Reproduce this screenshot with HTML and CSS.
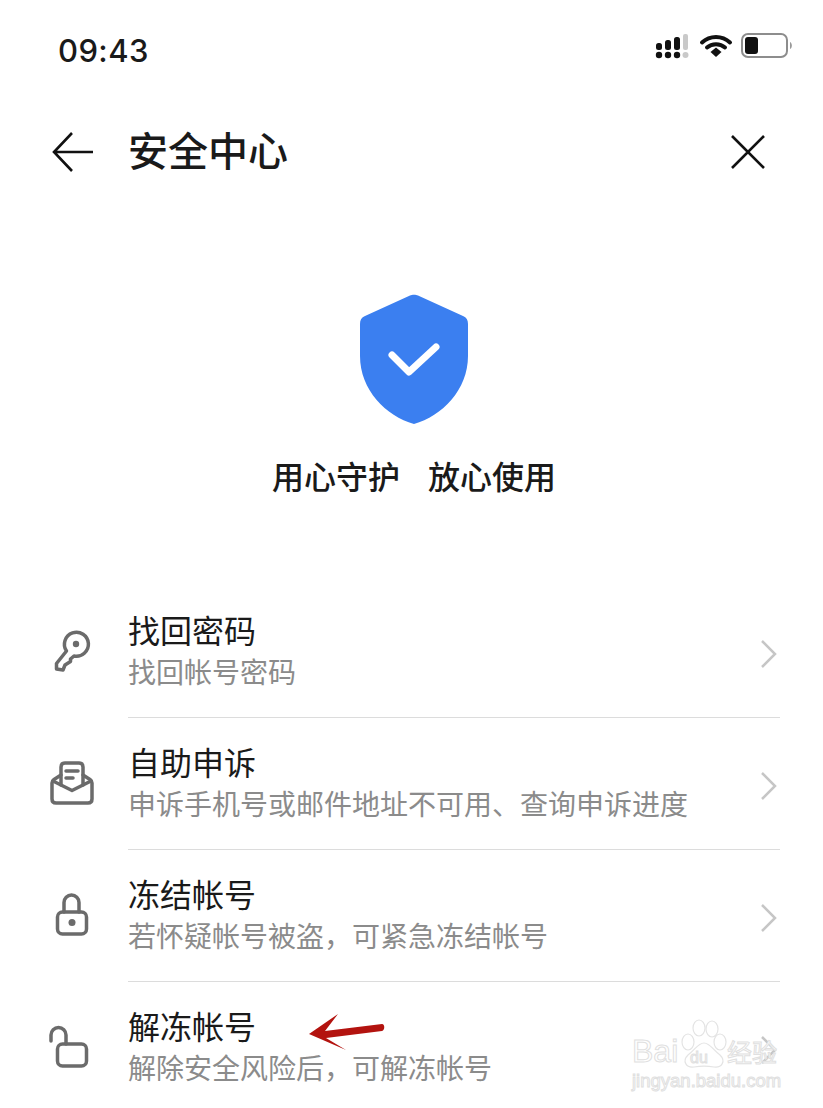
FILE: index.html
```html
<!DOCTYPE html>
<html lang="zh-CN">
  <head>
    <title>安全中心</title>
    <meta charset="UTF-8">
    <meta name="viewport" content="width=device-width, initial-scale=1">
    <link rel="stylesheet" href="styles.css">
  </head>
  <body>
    <div class="page">
      <!-- status bar -->
      <div class="status">
        <span class="time">09:43</span>
        <svg class="status-icons" width="140" height="30" viewBox="0 0 140 30">
          <g fill="#111">
            <rect x="1" y="11" width="6" height="7" rx="2.5"/>
            <rect x="10" y="8" width="6" height="10" rx="2.5"/>
            <rect x="19" y="5" width="6" height="13" rx="2.5"/>
            <circle cx="4" cy="23" r="3.2"/>
            <circle cx="13" cy="23" r="3.2"/>
            <circle cx="22" cy="23" r="3.2"/>
          </g>
          <rect x="28" y="2" width="5" height="16" rx="2" fill="#c9c9c9"/>
          <circle cx="30.5" cy="23" r="3" fill="#c9c9c9"/>
          <path d="M47 10.500C55 3 67 3 75 10.500M52 15.500C57 11 65 11 70 15.500" fill="none" stroke="#111" stroke-width="4" stroke-linecap="round"/>
          <path d="M55.500 20L61 15.500L66.500 20L61 25Z" fill="#111"/>
          <rect x="87" y="2" width="45" height="23" rx="6" fill="none" stroke="#8d8d8d" stroke-width="2"/>
          <rect x="90" y="5" width="13" height="17" rx="3" fill="#111"/>
          <path d="M135 10C137.500 11 137.500 16 135 17Z" fill="#9a9a9a"/>
        </svg>
      </div>

      <!-- nav -->
      <header class="nav">
        <svg class="nav-back" width="42" height="42" viewBox="0 0 42 42">
          <path d="M20 2L2 21L20 40M2 21H41" fill="none" stroke="#111" stroke-width="2.600"/>
        </svg>
        <h1 class="nav-title">安全中心</h1>
        <svg class="nav-close" width="34" height="34" viewBox="0 0 34 34">
          <path d="M1 1L33 33M33 1L1 33" fill="none" stroke="#111" stroke-width="2.600"/>
        </svg>
      </header>

      <!-- shield -->
      <section class="hero">
        <svg width="108" height="130" viewBox="0 0 108 130">
          <path d="M50 1.500C52 .5 56 .5 58 1.500L103 22C106.500 23.500 108 26 108 30V62C108 96 82 122 54 130C26 122 0 96 0 62V30C0 26 1.500 23.500 5 22Z" fill="#3b7ff0"/>
          <path d="M32 61L49 78L76 53" fill="none" stroke="#fff" stroke-width="7" stroke-linecap="round" stroke-linejoin="round"/>
        </svg>
        <p class="hero-text"><span>用心守护</span><span>放心使用</span></p>
      </section>

      <!-- menu -->
      <ul class="menu">
        <li class="row">
          <svg class="row-icon" width="60" height="60" viewBox="0 0 60 60">
            <path d="M24.500 31A12 12 0 1 1 32 36L28.500 39V41.500L23 45L21 50L14.500 49V43.500Z"/>
            <circle class="dot" cx="34" cy="24" r="3.200"/>
          </svg>
          <div class="row-text">
            <div class="row-title">找回密码</div>
            <div class="row-sub">找回帐号密码</div>
          </div>
          <svg class="chev" width="18" height="30" viewBox="0 0 18 30"><path d="M2 2L15 15L2 28"/></svg>
        </li>
        <li class="row">
          <svg class="row-icon" width="60" height="60" viewBox="0 0 60 60">
            <path d="M19 23L12 27.500Q10 29 10 31V47Q10 51 14 51H46Q50 51 50 47V31Q50 29 48 27.500L41 23"/>
            <path d="M11 29L30 38.500L49 29"/>
            <path d="M19 33V15Q19 11 23 11H37Q41 11 41 15V33"/>
            <path d="M24 19H36M24 26H31"/>
          </svg>
          <div class="row-text">
            <div class="row-title">自助申诉</div>
            <div class="row-sub">申诉手机号或邮件地址不可用、查询申诉进度</div>
          </div>
          <svg class="chev" width="18" height="30" viewBox="0 0 18 30"><path d="M2 2L15 15L2 28"/></svg>
        </li>
        <li class="row">
          <svg class="row-icon" width="60" height="60" viewBox="0 0 60 60">
            <rect x="15.500" y="28" width="29" height="22" rx="5"/>
            <path d="M22 28V18.500A7.500 7.500 0 0 1 37 18.500V28"/>
            <circle class="dot" cx="30" cy="38.500" r="3.500"/>
          </svg>
          <div class="row-text">
            <div class="row-title">冻结帐号</div>
            <div class="row-sub">若怀疑帐号被盗，可紧急冻结帐号</div>
          </div>
          <svg class="chev" width="18" height="30" viewBox="0 0 18 30"><path d="M2 2L15 15L2 28"/></svg>
        </li>
        <li class="row">
          <svg class="row-icon" width="60" height="60" viewBox="0 0 60 60">
            <rect x="15.500" y="28" width="29" height="22" rx="5"/>
            <path d="M9 25V19A7.500 7.500 0 0 1 24 19V28"/>
          </svg>
          <div class="row-text">
            <div class="row-title">解冻帐号</div>
            <div class="row-sub">解除安全风险后，可解冻帐号</div>
          </div>
          <svg class="chev" width="18" height="30" viewBox="0 0 18 30"><path d="M2 2L15 15L2 28"/></svg>
        </li>
      </ul>

      <!-- red arrow annotation -->
      <svg class="arrow" width="80" height="40" viewBox="0 0 80 40">
        <path d="M1 20L30 0L17 17L74 10C77 10 77 16 74 17L18 24L38 36Z" fill="#b3130f"/>
      </svg>

      <!-- watermark -->
      <div class="mark">
        <svg class="mark-paw" width="50" height="52" viewBox="0 0 50 52">
          <g fill="#fff" stroke="#e4e4e4" stroke-width="1.200">
            <ellipse cx="8" cy="24" rx="6" ry="8"/>
            <ellipse cx="19" cy="10" rx="6" ry="8"/>
            <ellipse cx="32" cy="11" rx="6" ry="8"/>
            <ellipse cx="40" cy="24" rx="6" ry="8"/>
            <path d="M24 25C30 25 33 32 40 37C46 43 42 50 34 49C28 48 20 48 14 49C6 50 2 43 8 37C15 32 18 25 24 25Z"/>
          </g>
        </svg>
        <span class="mark-bai">Bai</span>
        <span class="mark-du">du</span>
        <span class="mark-cn">经验</span>
        <span class="mark-url">jingyan.baidu.com</span>
      </div>
    </div>
  </body>
</html>
```

FILE: styles.css
```css
:root {
  --font-cjk: "Noto Sans CJK SC", "Noto Sans", sans-serif;
  --color-txt: #1a1a1a;
  --color-sub: #8b8b8b;
  --color-icon: #6b6b6b;
  --color-line: #dcdcdc;
}

* {
  box-sizing: border-box;
}

body {
  margin: 0;
  background-color: #fff;
  font-family: var(--font-cjk);
  color: var(--color-txt);
}

.page {
  position: relative;
  width: 823px;
  height: 1108px;
  overflow: hidden;
}

.status {
  display: flex;
  justify-content: space-between;
  align-items: center;
  height: 60px;
  padding: 40px 28px 0 58px;
}

.time {
  font-family: Inter, sans-serif;
  font-size: 31px;
  font-weight: 500;
  letter-spacing: 0.4px;
}

.status-icons {
  margin-top: -6px;
}

.nav {
  display: flex;
  align-items: center;
  height: 42px;
  margin-top: 71px;
  padding: 0 58px 0 52px;
}

.nav-title {
  flex: 1;
  margin: 0 0 6px 34px;
  font-size: 40px;
  font-weight: 500;
  line-height: 42px;
}

.hero {
  display: flex;
  flex-direction: column;
  align-items: center;
  margin-top: 121px;
  padding-left: 4px;
}

.hero-text {
  display: flex;
  gap: 28px;
  margin: 29px 0 0;
  padding-left: 1px;
  font-size: 32px;
  font-weight: 500;
  line-height: 44px;
}

.menu {
  margin: 89px 0 0;
  padding: 0;
  list-style: none;
}

.row {
  display: flex;
  align-items: center;
  width: 823px;
  padding-left: 42px;
}

.row-icon {
  flex: none;
  margin: 0 26px 4px 0;
  fill: none;
  stroke: var(--color-icon);
  stroke-width: 3.500;
  stroke-linejoin: round;
  stroke-linecap: round;
}

.row-icon .dot {
  fill: var(--color-icon);
  stroke: none;
}

.row-text {
  width: 652px;
  margin-right: 43px;
  padding: 22px 0 26px;
  border-bottom: 1px solid var(--color-line);
}

.row:last-child .row-text {
  border-bottom: 0;
}

.chev {
  flex: none;
  margin: 4px 0 0 -63px;
  fill: none;
  stroke: #c6c6c6;
  stroke-width: 2.500;
}

.row-title {
  font-size: 32px;
  line-height: 43px;
  white-space: nowrap;
}

.row-sub {
  font-size: 28px;
  line-height: 40px;
  color: var(--color-sub);
  white-space: nowrap;
}

.arrow {
  position: absolute;
  left: 308px;
  top: 1014px;
}

.mark {
  position: absolute;
  left: 630px;
  top: 1012px;
  width: 160px;
  height: 90px;
  color: #fff;
  -webkit-text-stroke: 1px #e0e0e0;
}

.mark span {
  position: absolute;
  white-space: nowrap;
}

.mark-paw {
  position: absolute;
  left: 50px;
  top: 6px;
}

.mark-bai {
  left: 2px;
  top: 20px;
  font-family: "Liberation Sans", sans-serif;
  font-size: 32px;
  line-height: 38px;
}

.mark-du {
  left: 60px;
  top: 36px;
  font-family: "Liberation Sans", sans-serif;
  font-size: 16px;
  line-height: 20px;
}

.mark-cn {
  left: 97px;
  top: 23px;
  font-size: 25px;
  line-height: 32px;
}

.mark-url {
  left: 2px;
  top: 58px;
  font-family: "Liberation Sans", sans-serif;
  font-size: 18.500px;
  line-height: 22px;
}
```
